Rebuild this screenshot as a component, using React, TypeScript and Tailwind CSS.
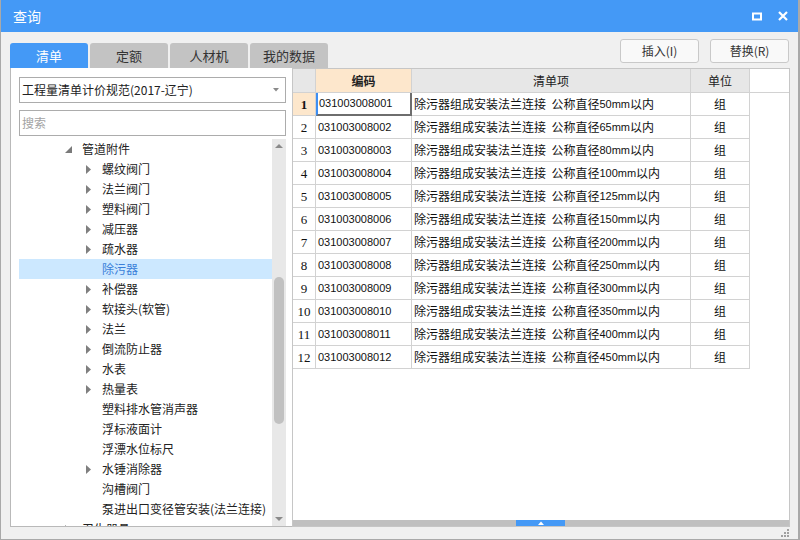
import React from "react";

const cjk = "font-['Noto_Sans_CJK_SC',sans-serif]";

// tree rows: level 1 = category, level 2 = item; arrow: "open" | "closed" | null
const tree: { label: string; level: number; arrow: "open" | "closed" | null }[] = [
  { label: "管道附件", level: 1, arrow: "open" },
  { label: "螺纹阀门", level: 2, arrow: "closed" },
  { label: "法兰阀门", level: 2, arrow: "closed" },
  { label: "塑料阀门", level: 2, arrow: "closed" },
  { label: "减压器", level: 2, arrow: "closed" },
  { label: "疏水器", level: 2, arrow: "closed" },
  { label: "除污器", level: 2, arrow: null },
  { label: "补偿器", level: 2, arrow: "closed" },
  { label: "软接头(软管)", level: 2, arrow: "closed" },
  { label: "法兰", level: 2, arrow: "closed" },
  { label: "倒流防止器", level: 2, arrow: "closed" },
  { label: "水表", level: 2, arrow: "closed" },
  { label: "热量表", level: 2, arrow: "closed" },
  { label: "塑料排水管消声器", level: 2, arrow: null },
  { label: "浮标液面计", level: 2, arrow: null },
  { label: "浮漂水位标尺", level: 2, arrow: null },
  { label: "水锤消除器", level: 2, arrow: "closed" },
  { label: "沟槽阀门", level: 2, arrow: null },
  { label: "泵进出口变径管安装(法兰连接)", level: 2, arrow: null },
  { label: "卫生器具", level: 1, arrow: "closed" },
];

const sizes = [50, 65, 80, 100, 125, 150, 200, 250, 300, 350, 400, 450];
const rows = sizes.map((s, i) => ({
  no: i + 1,
  code: `0310030080${String(i + 1).padStart(2, "0")}`,
  size: `${s}mm`,
  unit: "组",
}));

const TreeArrow = ({ kind }: { kind: "open" | "closed" }) =>
  kind === "open" ? (
    <svg width="7" height="7" viewBox="0 0 7 7">
      <path d="M7 0 L7 7 L0 7 Z" fill="#7a7a7a" />
    </svg>
  ) : (
    <svg width="5" height="9" viewBox="0 0 5 9">
      <path d="M0 0 L5 4.5 L0 9 Z" fill="#7f7f7f" />
    </svg>
  );

const App: React.FC = () => {
  const tabs = ["清单", "定额", "人材机", "我的数据"];

  return (
    <div
      className={`w-[800px] h-[540px] flex flex-col bg-[#f0f0f0] border-l border-b border-r-2 border-[#a9a9a9] overflow-hidden ${cjk}`}
    >
      {/* title bar */}
      <div className="h-[32px] shrink-0 bg-[#4499f6] flex items-center justify-between pl-[12px] pr-[10px]">
        <span className="text-white text-[14px] leading-none">查询</span>
        <div className="flex items-center gap-[16px]">
          <svg width="10" height="9" viewBox="0 0 10 9">
            <rect x="1" y="1.5" width="8" height="6" fill="none" stroke="#fff" strokeWidth="2" />
          </svg>
          <svg width="10" height="10" viewBox="0 0 10 10">
            <path d="M1 1 L9 9 M9 1 L1 9" stroke="#fff" strokeWidth="2.2" />
          </svg>
        </div>
      </div>

      <div className="flex-1 flex flex-col pl-[9px] pr-[8px]">
        {/* tabs + buttons */}
        <div className="h-[36px] shrink-0 flex justify-between">
          <div className="flex items-end gap-[2px]">
            {tabs.map((t, i) => (
              <div
                key={t}
                className={`w-[78px] h-[25px] rounded-t-[3px] flex items-center justify-center text-[13px] leading-none ${
                  i === 0 ? "bg-[#4499f6] text-white" : "bg-[#c3c3c3] text-[#333]"
                }`}
              >
                {t}
              </div>
            ))}
          </div>
          <div className="flex gap-[11px] mt-[7px] mr-[1px]">
            {["插入(I)", "替换(R)"].map((b) => (
              <button
                key={b}
                className="w-[79px] h-[24px] rounded-[3px] border border-[#c9c9c9] bg-[#f9f9f9] text-[12px] leading-none text-[#333]"
              >
                {b}
              </button>
            ))}
          </div>
        </div>

        {/* main */}
        <div className="h-[459px] shrink-0 flex">
          {/* left panel */}
          <div className="w-[282px] shrink-0 bg-white border-l border-b border-[#b9b9b9] flex flex-col pl-[8px] pr-[6px] pt-[9px]">
            <div className="h-[26px] shrink-0 border border-[#acacac] flex items-center justify-between pl-[2px] pr-[6px]">
              <span className="text-[12px] leading-none text-[#222]">工程量清单计价规范(2017-辽宁)</span>
              <svg width="6" height="4" viewBox="0 0 6 4">
                <path d="M0 0 L6 0 L3 3.5 Z" fill="#8a8a8a" />
              </svg>
            </div>
            <div className="h-[26px] shrink-0 mt-[7px] border border-[#acacac] flex items-center pl-[2px]">
              <span className="text-[12px] leading-none text-[#a3a3a3]">搜索</span>
            </div>
            <div className="flex-1 mt-[3px] flex overflow-hidden">
              <div className="flex-1 overflow-hidden">
                {tree.map((n, i) => {
                  const selected = n.label === "除污器";
                  return (
                    <div
                      key={i}
                      className={`h-[20px] flex items-center whitespace-nowrap ${selected ? "bg-[#cce8ff]" : ""} ${
                        n.level === 1 ? "pl-[46px]" : "pl-[67px]"
                      }`}
                    >
                      <span className={`flex items-center ${n.level === 1 ? "w-[17px]" : "w-[16px]"}`}>
                        {n.arrow && <TreeArrow kind={n.arrow} />}
                      </span>
                      <span className={`text-[12px] leading-none ${selected ? "text-[#3a7fd9]" : "text-[#222]"}`}>
                        {n.label}
                      </span>
                    </div>
                  );
                })}
              </div>
              {/* vertical scrollbar */}
              <div className="w-[14px] shrink-0 bg-[#e8e8e8] flex flex-col items-center">
                <div className="h-[14px] flex items-center justify-center">
                  <svg width="8" height="4" viewBox="0 0 8 4">
                    <path d="M0 4 L4 0 L8 4 Z" fill="#8a8a8a" />
                  </svg>
                </div>
                <div className="flex-1 pt-[124px]">
                  <div className="w-[10px] h-[147px] rounded-full bg-[#c1c1c1]" />
                </div>
                <div className="h-[14px] flex items-center justify-center">
                  <svg width="8" height="4" viewBox="0 0 8 4">
                    <path d="M0 0 L8 0 L4 4 Z" fill="#8a8a8a" />
                  </svg>
                </div>
              </div>
            </div>
          </div>

          {/* right panel */}
          <div className="flex-1 bg-white border border-[#c6c6c6] flex flex-col">
            <div className="flex-1">
              <div className="flex h-[24px] border-b border-[#d2d2d2] text-[12px] leading-none text-[#222]">
                <div className="w-[23px] bg-[#e7e7e7] border-r border-[#d2d2d2]" />
                <div className="w-[96px] bg-[#fde7cc] border-r border-[#d2d2d2] flex items-center justify-center font-bold">
                  编码
                </div>
                <div className="w-[279px] bg-[#e7e7e7] border-r border-[#d2d2d2] flex items-center justify-center">
                  清单项
                </div>
                <div className="w-[59px] bg-[#e7e7e7] border-r border-[#d2d2d2] flex items-center justify-center">
                  单位
                </div>
              </div>
              {rows.map((r, i) => {
                const first = i === 0;
                return (
                  <div key={r.no} className="flex h-[23px] text-[#111]">
                    <div
                      className={`w-[23px] border-r border-b border-[#d2d2d2] flex items-center justify-center font-['Liberation_Serif',serif] text-[13px] leading-none ${
                        first ? "bg-[#fde7cc] font-bold" : ""
                      }`}
                    >
                      {r.no}
                    </div>
                    <div
                      className={`w-[96px] flex items-center font-['Liberation_Sans',sans-serif] text-[11px] leading-none ${
                        first
                          ? "pl-[1px] border-l-2 border-l-[#3d8ef2] border-r-2 border-r-[#6e6e6e] border-b-2 border-b-[#6e6e6e]"
                          : "pl-[2px] border-r border-b border-[#d2d2d2]"
                      }`}
                    >
                      {r.code}
                    </div>
                    <div className="w-[279px] border-r border-b border-[#d2d2d2] flex items-center pl-[2px] text-[12px] leading-none whitespace-pre">
                      <span>除污器组成安装法兰连接  公称直径</span>
                      <span className="font-['Liberation_Sans',sans-serif] text-[11px]">{r.size}</span>
                      <span>以内</span>
                    </div>
                    <div className="w-[59px] border-r border-b border-[#d2d2d2] flex items-center justify-center text-[12px] leading-none">
                      {r.unit}
                    </div>
                  </div>
                );
              })}
            </div>
            {/* horizontal scrollbar */}
            <div className="h-[6px] shrink-0 bg-[#c0c0c0] flex">
              <div className="ml-[223px] w-[49px] bg-[#4499f6] flex items-center justify-center">
                <svg width="6" height="4" viewBox="0 0 6 4">
                  <path d="M0 4 L3 0.5 L6 4 Z" fill="#fff" />
                </svg>
              </div>
            </div>
          </div>
        </div>

        {/* bottom strip with grip */}
        <div className="flex-1 flex justify-end items-end pb-[1px]">
          <svg width="10" height="10" viewBox="0 0 10 10">
            <rect x="7" y="1" width="2" height="2" fill="#a0a0a0" />
            <rect x="4" y="4" width="2" height="2" fill="#a0a0a0" />
            <rect x="7" y="4" width="2" height="2" fill="#a0a0a0" />
            <rect x="1" y="7" width="2" height="2" fill="#a0a0a0" />
            <rect x="4" y="7" width="2" height="2" fill="#a0a0a0" />
            <rect x="7" y="7" width="2" height="2" fill="#a0a0a0" />
          </svg>
        </div>
      </div>
    </div>
  );
};

export default App;
